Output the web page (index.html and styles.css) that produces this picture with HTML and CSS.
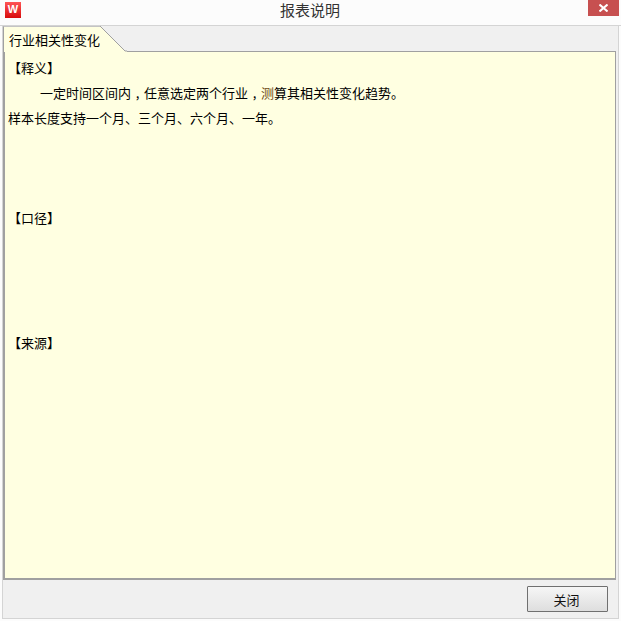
FILE: index.html
```html
<!DOCTYPE html>
<html lang="zh-CN">
<head>
    <meta charset="UTF-8">
    <title>报表说明</title>
    <link rel="stylesheet" href="styles.css">
</head>
<body>
    <div class="window">
        <div class="titlebar">
            <div class="logo">W</div>
            <div class="title">报表说明</div>
            <div class="close">
                <svg width="9" height="8" viewBox="0 0 9 8">
                    <path d="M0.5 0.5L8.5 7.5M8.5 0.5L0.5 7.5" stroke="#fff" stroke-width="2" fill="none"/>
                </svg>
            </div>
        </div>
        <div class="content">
            <div class="tabs">
                <div class="tab">
                    <span class="tab-label">行业相关性变化</span>
                    <svg class="tab-corner" width="27" height="26" viewBox="0 0 27 26">
                        <path d="M0 0L25 25H27V26H0Z" fill="#ffffe1"/>
                        <path d="M0 0L25 25H27" fill="none" stroke="#a0a0a0"/>
                    </svg>
                </div>
            </div>
            <div class="panel">
                <p class="line">【释义】</p>
                <p class="line indent">一定时间区间内<span class="comma">,</span>任意选定两个行业<span class="comma">,</span><span class="mark">测</span>算其相关性变化趋势。</p>
                <p class="line section-end">样本长度支持一个月、三个月、六个月、一年。</p>
                <p class="line section-end-long">【口径】</p>
                <p class="line">【来源】</p>
            </div>
        </div>
        <div class="footer">
            <button class="btn">关闭</button>
        </div>
    </div>
</body>
</html>
```

FILE: styles.css
```css
body {
    margin: 0;
    background-color: #fff;
    font-family: "Noto Sans CJK SC", "Noto Sans", sans-serif;
    color: #000;
}
p {
    margin: 0;
}
.window {
    width: 621px;
    height: 621px;
    display: flex;
    flex-direction: column;
    background-color: #fcfcfc;
}
.titlebar {
    height: 26px;
    flex: none;
    display: flex;
    align-items: flex-start;
    padding: 2px 2px 0 5px;
    box-sizing: border-box;
    border-bottom: 1px solid #d4d4d4;
}
.logo {
    width: 16px;
    height: 16px;
    background: linear-gradient(#f55, #d80c0c);
    color: #fff;
    font-family: "Liberation Sans", sans-serif;
    font-size: 11px;
    font-weight: bold;
    line-height: 15px;
    text-align: center;
}
.title {
    flex: 1;
    margin-top: -3px;
    padding-left: 11px;
    text-align: center;
    font-size: 15px;
    line-height: 21px;
    color: #333;
}
.close {
    width: 31px;
    height: 16px;
    margin-top: -2px;
    background-color: #c75050;
    display: flex;
    align-items: center;
    justify-content: center;
}
.content {
    margin: 0 2px;
    border-left: 1px solid #d4d4d4;
    border-right: 1px solid #d4d4d4;
    background-color: #f0f0f0;
    flex: 1;
    display: flex;
    flex-direction: column;
}
.tabs {
    height: 25px;
    flex: none;
    display: flex;
}
.tab {
    position: relative;
    width: 97px;
    box-sizing: border-box;
    height: 26px;
    background-color: #ffffe1;
    border-left: 1px solid #a0a0a0;
    border-top: 1px solid #c4c4c4;
    z-index: 1;
}
.tab-label {
    display: block;
    padding-left: 5px;
    font-size: 13px;
    line-height: 25px;
}
.tab-corner {
    position: absolute;
    left: 96px;
    top: -1px;
}
.panel {
    flex: 1;
    margin-right: 2px;
    box-sizing: border-box;
    border: 1px solid #a0a0a0;
    border-left-width: 2px;
    border-bottom-width: 2px;
    background-color: #ffffe1;
    padding: 3px 0 0 3px;
    font-size: 13px;
}
.line {
    line-height: 25px;
    height: 25px;
    white-space: nowrap;
}
.indent {
    padding-left: 32px;
}
.section-end {
    margin-bottom: 75px;
}
.section-end-long {
    margin-bottom: 100px;
}
.comma {
    display: inline-block;
    width: 13px;
    text-align: center;
}
.mark {
    color: #6e4a10;
}
.footer {
    height: 39px;
    flex: none;
    margin: 0 2px 2px;
    box-sizing: border-box;
    border: 1px solid #d4d4d4;
    border-top: none;
    background-color: #f0f0f0;
    display: flex;
    justify-content: flex-end;
    padding: 6px 10px 0 0;
}
.btn {
    width: 81px;
    height: 26px;
    padding: 0 2px 0 0;
    border: 1px solid #707070;
    border-radius: 1px;
    background: linear-gradient(#f6f6f6, #dedede);
    font-family: inherit;
    font-size: 13px;
    color: #111;
}
```
